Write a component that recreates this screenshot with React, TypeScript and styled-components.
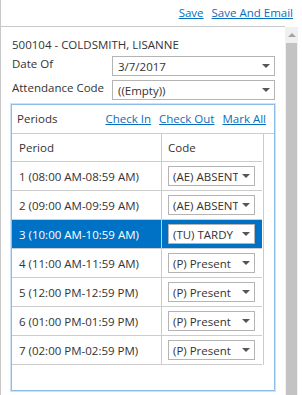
import styled, { createGlobalStyle } from "styled-components";

const COLORS = {
  text: "#333333",
  link: "#0a6ebd",
  line: "#c8c8c8",
  cell: "#cccccc",
  selBorder: "#b4b4b4",
  panel: "#8cbbec",
  panelGlow: "#cfe2f7",
  highlight: "#0072c6",
  track: "#f0f0f0",
  thumb: "#c3c3c3",
};

const FONT = `"Open Sans", "Noto Sans", "Liberation Sans", sans-serif`;

const periods = [
  { label: "1 (08:00 AM-08:59 AM)", code: "(AE) ABSENT" },
  { label: "2 (09:00 AM-09:59 AM)", code: "(AE) ABSENT" },
  { label: "3 (10:00 AM-10:59 AM)", code: "(TU) TARDY", selected: true },
  { label: "4 (11:00 AM-11:59 AM)", code: "(P) Present" },
  { label: "5 (12:00 PM-12:59 PM)", code: "(P) Present" },
  { label: "6 (01:00 PM-01:59 PM)", code: "(P) Present" },
  { label: "7 (02:00 PM-02:59 PM)", code: "(P) Present" },
];

const GlobalStyle = createGlobalStyle`
  html, body {
    margin: 0;
    padding: 0;
    background: #ffffff;
  }
  body {
    font-family: ${FONT};
    font-size: 11.5px;
    color: ${COLORS.text};
  }
`;

const App = () => {
  return (
    <>
      <GlobalStyle />
      <Frame>
        <TopBar>
          <Link>Save</Link>
          <Link>Save And Email</Link>
        </TopBar>

        <Body>
          <Content>
            <StudentName>500104 - COLDSMITH, LISANNE</StudentName>

            <FieldRow>
              <FieldLabel>Date Of</FieldLabel>
              <DropDown value="3/7/2017" />
            </FieldRow>

            <FieldRow>
              <FieldLabel>Attendance Code</FieldLabel>
              <DropDown value="((Empty))" />
            </FieldRow>

            <Panel>
              <PanelHeader>
                <PanelTitle>Periods</PanelTitle>
                <Link>Check In</Link>
                <Link>Check Out</Link>
                <Link>Mark All</Link>
              </PanelHeader>

              <Table>
                <HeadRow>
                  <PeriodCell>Period</PeriodCell>
                  <CodeCell>Code</CodeCell>
                </HeadRow>
                {periods.map((p) => (
                  <PeriodRow key={p.label} $selected={p.selected}>
                    <PeriodCell>{p.label}</PeriodCell>
                    <CodeCell>
                      <CodeSelect>
                        <span className="value">{p.code}</span>
                        <Caret />
                      </CodeSelect>
                    </CodeCell>
                  </PeriodRow>
                ))}
              </Table>
            </Panel>
          </Content>

          <ScrollBar>
            <ScrollArrow />
            <ScrollThumb />
          </ScrollBar>
        </Body>
      </Frame>
    </>
  );
};

const DropDown = ({ value }: { value: string }) => (
  <FieldBox>
    <span>{value}</span>
    <Caret />
  </FieldBox>
);

export default App;

const Frame = styled.div`
  width: 302px;
  height: 395px;
  box-sizing: border-box;
  border-left: 1px solid ${COLORS.line};
  display: flex;
  flex-direction: column;
  overflow: hidden;
`;

const TopBar = styled.div`
  height: 26px;
  display: flex;
  justify-content: flex-end;
  align-items: center;
  gap: 8px;
  padding: 0 9px 2px 0;
  box-sizing: border-box;
`;

const Link = styled.a`
  color: ${COLORS.link};
  text-decoration: underline;
  cursor: pointer;
  white-space: nowrap;
`;

const Body = styled.div`
  flex: 1;
  display: flex;
  min-height: 0;
`;

const Content = styled.div`
  width: 284px;
  border-top: 1px solid ${COLORS.line};
  padding: 9px 10px 0 10px;
  box-sizing: border-box;
  display: flex;
  flex-direction: column;
`;

const StudentName = styled.div`
  height: 20px;
  line-height: 18px;
  padding-left: 1px;
`;

const FieldRow = styled.div`
  display: flex;
  align-items: flex-start;
  height: 24px;
`;

const FieldLabel = styled.div`
  width: 100px;
  padding-left: 1px;
  line-height: 16px;
`;

const FieldBox = styled.div`
  flex: 1;
  height: 20px;
  box-sizing: border-box;
  border: 1px solid ${COLORS.selBorder};
  display: flex;
  align-items: center;
  justify-content: space-between;
  padding: 0 4px 0 5px;
`;

const Caret = styled.span`
  width: 0;
  height: 0;
  border-left: 4px solid transparent;
  border-right: 4px solid transparent;
  border-top: 4px solid #555555;
  flex-shrink: 0;
`;

const Panel = styled.div`
  flex: 1;
  margin-bottom: 4px;
  border: 1px solid ${COLORS.panel};
  box-shadow: 0 0 0 1px ${COLORS.panelGlow};
  display: flex;
  flex-direction: column;
`;

const PanelHeader = styled.div`
  height: 29px;
  box-sizing: border-box;
  border-bottom: 1px solid ${COLORS.cell};
  display: flex;
  align-items: center;
  gap: 8px;
  padding: 0 8px 2px 5px;
`;

const PanelTitle = styled.span`
  flex: 1;
`;

const Table = styled.div`
  width: 251px;
  border-right: 1px solid ${COLORS.cell};
  display: grid;
  grid-template-columns: 150px 100px;
`;

const HeadRow = styled.div`
  display: contents;

  & > div {
    height: 28px;
  }
`;

const PeriodRow = styled.div<{ $selected?: boolean }>`
  display: contents;

  & > div {
    height: 29px;
    background: ${(p) => (p.$selected ? COLORS.highlight : "transparent")};
    color: ${(p) => (p.$selected ? "#ffffff" : COLORS.text)};
  }
`;

const PeriodCell = styled.div`
  box-sizing: border-box;
  border-bottom: 1px solid ${COLORS.cell};
  border-right: 1px solid ${COLORS.cell};
  display: flex;
  align-items: center;
  padding-left: 7px;
  white-space: nowrap;
`;

const CodeCell = styled.div`
  box-sizing: border-box;
  border-bottom: 1px solid ${COLORS.cell};
  display: flex;
  align-items: center;
  padding-left: 6px;
`;

const CodeSelect = styled.div`
  width: 87px;
  height: 20px;
  box-sizing: border-box;
  border: 1px solid ${COLORS.selBorder};
  background: #ffffff;
  color: ${COLORS.text};
  display: flex;
  align-items: center;
  padding: 0 4px 0 4px;
  gap: 4px;

  .value {
    flex: 1;
    overflow: hidden;
    white-space: nowrap;
  }
`;

const ScrollBar = styled.div`
  width: 13px;
  margin-top: 1px;
  background: ${COLORS.track};
  display: flex;
  flex-direction: column;
  align-items: center;
`;

const ScrollArrow = styled.span`
  margin-top: 6px;
  width: 0;
  height: 0;
  border-left: 4px solid transparent;
  border-right: 4px solid transparent;
  border-bottom: 4px solid #a3a3a3;
`;

const ScrollThumb = styled.div`
  margin-top: 6px;
  width: 11px;
  flex: 1;
  background: ${COLORS.thumb};
`;
